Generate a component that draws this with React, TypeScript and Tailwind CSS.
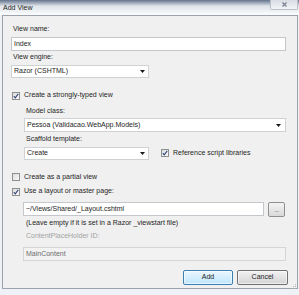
import React from "react";

const font = { fontFamily: '"Liberation Sans", Arial, sans-serif' };

function Check({ checked }: { checked?: boolean }) {
  return (
    <span className="relative flex h-[8px] w-[8px] shrink-0 items-center justify-center border border-[#8e8f8f] bg-gradient-to-br from-[#dcdcdc] to-[#fbfbfb]">
      {checked && (
        <svg width="6" height="6" viewBox="0 0 6 6" className="absolute">
          <path d="M0.8 3.2 L2.3 4.8 L5.2 0.9" fill="none" stroke="#31467a" strokeWidth="1.1" />
        </svg>
      )}
    </span>
  );
}

function Arrow() {
  return (
    <svg width="5" height="3" viewBox="0 0 5 3" className="shrink-0">
      <path d="M0 0 H5 L2.5 3 Z" fill="#1a1a1a" />
    </svg>
  );
}

function Label({ children, gray, indent }: { children: React.ReactNode; gray?: boolean; indent?: boolean }) {
  return (
    <div
      className={`h-[10px] text-[7px] leading-[10px] whitespace-nowrap ${indent ? "pl-[23px]" : "pl-[10px]"} ${
        gray ? "text-[#a3a3a3]" : "text-[#1e1e1e]"
      }`}
    >
      {children}
    </div>
  );
}

export default function App() {
  return (
    <div className="flex h-[295px] w-[299px] flex-col overflow-hidden bg-[#eef1f5]" style={font}>
      {/* Title bar */}
      <div className="relative flex h-[15px] shrink-0 items-center bg-gradient-to-b from-[#66758d] from-0% via-[#dfe4ea] via-40% to-[#fbfcfd] pl-[3px]">
        <span className="text-[7px] leading-[10px] text-[#1c1c1c]">Add View</span>
        <div className="absolute right-[1px] top-0 flex h-[10px] w-[28px] items-center justify-center rounded-b-[2px] border border-t-0 border-[#b9c0c9] bg-gradient-to-b from-[#d8dde4] to-[#f2f4f7]">
          <svg width="5" height="5" viewBox="0 0 5 5">
            <path d="M0.5 0.5 L4.5 4.5 M4.5 0.5 L0.5 4.5" stroke="#7d8390" strokeWidth="1.3" />
          </svg>
        </div>
      </div>

      {/* Client area */}
      <div className="mx-[2px] flex h-[274px] w-[296px] flex-col border border-[#9da3aa] bg-[#f0f0f0] pb-[3px]">
        <div className="mt-[8px]">
          <Label>View name:</Label>
        </div>
        <div className="ml-[8px] mr-[11px] mt-[3px] flex h-[14px] items-center border border-[#c4c8cc] bg-white pl-[2px] text-[7px] text-[#1e1e1e]">
          Index
        </div>
        <div className="mt-[1px]">
          <Label>View engine:</Label>
        </div>
        <div className="ml-[8px] mt-[3px] flex h-[13px] w-[138px] items-center justify-between border border-[#cfd2d5] bg-white pl-[2px] pr-[3px] text-[7px] text-[#1e1e1e]">
          <span>Razor (CSHTML)</span>
          <Arrow />
        </div>

        <div className="ml-[9px] mt-[12px] flex h-[11px] items-center gap-[4px] text-[7px] text-[#1e1e1e]">
          <Check checked />
          <span>Create a strongly-typed view</span>
        </div>

        <div className="mt-[5px]">
          <Label indent>Model class:</Label>
        </div>
        <div className="ml-[21px] mr-[11px] mt-[2px] flex h-[14px] items-center justify-between border border-[#cfd2d5] bg-white pl-[2px] pr-[4px] text-[7px] text-[#1e1e1e]">
          <span>Pessoa (Validacao.WebApp.Models)</span>
          <Arrow />
        </div>
        <div className="mt-[2px]">
          <Label indent>Scaffold template:</Label>
        </div>
        <div className="ml-[21px] mt-[2px] flex h-[14px] items-center gap-[12px]">
          <div className="flex h-[13px] w-[125px] items-center justify-between border border-[#cfd2d5] bg-white pl-[2px] pr-[3px] text-[7px] text-[#1e1e1e]">
            <span>Create</span>
            <Arrow />
          </div>
          <div className="flex items-center gap-[4px] text-[7px] text-[#1e1e1e]">
            <Check checked />
            <span>Reference script libraries</span>
          </div>
        </div>

        <div className="ml-[9px] mt-[12px] flex h-[10px] items-center gap-[4px] text-[7px] text-[#1e1e1e]">
          <Check />
          <span>Create as a partial view</span>
        </div>
        <div className="ml-[9px] mt-[4px] flex h-[11px] items-center gap-[4px] text-[7px] text-[#1e1e1e]">
          <Check checked />
          <span>Use a layout or master page:</span>
        </div>

        <div className="ml-[20px] mr-[12px] mt-[5px] flex h-[15px] items-start gap-[4px]">
          <div className="flex h-[14px] flex-1 items-center border border-[#c4c8cc] bg-white pl-[2px] text-[7px] text-[#1e1e1e]">
            ~/Views/Shared/_Layout.cshtml
          </div>
          <div className="flex h-[15px] w-[17px] items-center justify-center rounded-[2px] border border-[#8f8f8f] bg-gradient-to-b from-[#f4f4f4] to-[#d9d9d9] text-[7px] leading-[7px] tracking-[-0.5px] text-[#7a7a7a]">
            ...
          </div>
        </div>
        <div className="mt-[1px]">
          <Label indent>(Leave empty if it is set in a Razor _viewstart file)</Label>
        </div>
        <div className="mt-[3px]">
          <Label indent gray>
            ContentPlaceHolder ID:
          </Label>
        </div>
        <div className="ml-[20px] mr-[11px] mt-[6px] flex h-[14px] items-center border border-[#d3d5d8] bg-[#f2f2f2] pl-[2px] text-[7px] text-[#6d6d6d]">
          MainContent
        </div>

        <div className="mr-[9px] mt-[9px] flex h-[15px] justify-end gap-[4px]">
          <div className="flex w-[50px] items-center justify-center rounded-[2px] border border-[#3c7fb1] bg-gradient-to-b from-[#eaf6fd] to-[#bee6fd] text-[7px] text-[#1e1e1e] shadow-[inset_0_0_0_1px_rgba(255,255,255,0.6)]">
            Add
          </div>
          <div className="flex w-[51px] items-center justify-center rounded-[2px] border border-[#707070] bg-gradient-to-b from-[#f2f2f2] to-[#d4d4d4] text-[7px] text-[#1e1e1e] shadow-[inset_0_0_0_1px_rgba(255,255,255,0.6)]">
            Cancel
          </div>
        </div>
      </div>

      {/* Bottom frame with resize grip */}
      <div className="relative h-[6px] shrink-0">
        <svg width="6" height="6" viewBox="0 0 6 6" className="absolute right-[2px] top-[-5px]">
          <rect x="4" y="0" width="1" height="1" fill="#b0b0b0" />
          <rect x="2" y="2" width="1" height="1" fill="#b0b0b0" />
          <rect x="4" y="2" width="1" height="1" fill="#b0b0b0" />
          <rect x="0" y="4" width="1" height="1" fill="#b0b0b0" />
          <rect x="2" y="4" width="1" height="1" fill="#b0b0b0" />
          <rect x="4" y="4" width="1" height="1" fill="#b0b0b0" />
        </svg>
      </div>
    </div>
  );
}
